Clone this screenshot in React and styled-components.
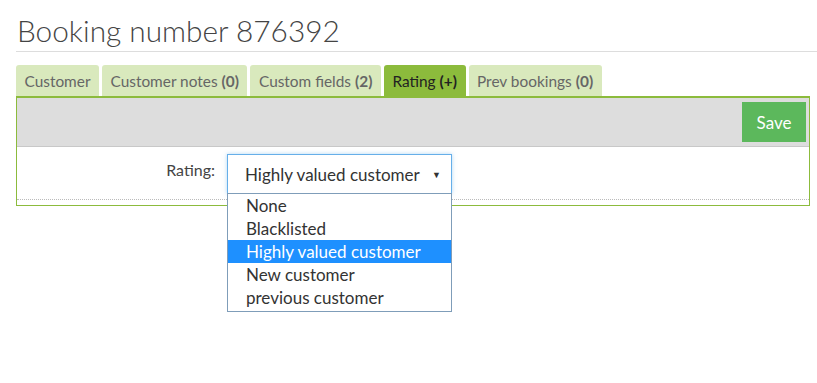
import React, { useState } from 'react';
import styled, { createGlobalStyle } from 'styled-components';

const GlobalStyle = createGlobalStyle`
  body {
    margin: 0;
    background: #fff;
    font-family: Lato, "Liberation Sans", sans-serif;
    color: #333;
  }
`;

const tabs = [
  { label: 'Customer' },
  { label: 'Customer notes', count: '0' },
  { label: 'Custom fields', count: '2' },
  { label: 'Rating', count: '+', active: true },
  { label: 'Prev bookings', count: '0' },
];

const options = ['None', 'Blacklisted', 'Highly valued customer', 'New customer', 'previous customer'];

const App = () => {
  const [rating] = useState('Highly valued customer');

  return (
    <>
      <GlobalStyle />
      <Page>
        <Title>Booking number 876392</Title>
        <TabBar>
          {tabs.map(tab => (
            <Tab key={tab.label} active={tab.active}>
              {tab.label}
              {tab.count && <Count>({tab.count})</Count>}
            </Tab>
          ))}
        </TabBar>
        <Panel>
          <Toolbar>
            <SaveButton>Save</SaveButton>
          </Toolbar>
          <FormRow>
            <Label>Rating:</Label>
            <SelectWrap>
              <SelectBox>
                <span>{rating}</span>
                <Caret>▼</Caret>
              </SelectBox>
              <OptionList>
                {options.map(opt => (
                  <Option key={opt} selected={opt === rating}>{opt}</Option>
                ))}
              </OptionList>
            </SelectWrap>
          </FormRow>
        </Panel>
      </Page>
    </>
  );
};

const Page = styled.div`
  box-sizing: border-box;
  min-height: 383px;
  padding: 14px 0 0 16px;
`;

const Title = styled.h1`
  margin: 0;
  padding: 0 0 3px 1px;
  font-size: 29.8px;
  font-weight: 300;
  line-height: 34px;
  color: #444;
  border-bottom: 1px solid #ddd;
`;

const TabBar = styled.div`
  display: flex;
  gap: 3px;
  margin-top: 13px;
`;

const Tab = styled.div`
  height: 31px;
  padding: 0 8.5px;
  display: flex;
  align-items: center;
  border-radius: 3px 3px 0 0;
  font-size: 15.4px;
  background: ${props => (props.active ? '#8cbb3c' : '#d9e9bd')};
  color: ${props => (props.active ? '#222' : '#666')};
`;

const Count = styled.b`
  margin-left: 4px;
`;

const Panel = styled.div`
  width: 792px;
  border: 1px solid #8cbb3c;
  border-top-width: 2px;
`;

const Toolbar = styled.div`
  display: flex;
  justify-content: flex-end;
  padding: 4px 3px 4px 0;
  background: #dddddd;
  border-bottom: 1px solid #c8c8c8;
`;

const SaveButton = styled.button`
  width: 64px;
  height: 40px;
  border: none;
  background: #5cb85c;
  color: #fff;
  font-family: inherit;
  font-size: 17px;
`;

const FormRow = styled.div`
  display: flex;
  align-items: flex-start;
  gap: 12px;
  padding: 7px 0 5px;
  border-bottom: 1px dotted #bbb;
  margin-bottom: 5px;
`;

const Label = styled.label`
  width: 198px;
  text-align: right;
  font-size: 16px;
  line-height: 20px;
  margin-top: 6px;
  color: #444;
`;

const SelectWrap = styled.div`
  position: relative;
`;

const SelectBox = styled.div`
  box-sizing: border-box;
  width: 225px;
  height: 40px;
  padding: 0 10px 0 17px;
  display: flex;
  align-items: center;
  justify-content: space-between;
  border: 1px solid #66afe9;
  box-shadow: 0 0 4px rgba(102, 175, 233, 0.5);
  font-size: 17px;
  color: #333;
`;

const Caret = styled.span`
  font-size: 9px;
  color: #333;
`;

const OptionList = styled.ul`
  position: absolute;
  top: 39px;
  left: 0;
  box-sizing: border-box;
  width: 225px;
  margin: 0;
  padding: 0 0 2px;
  list-style: none;
  background: #fff;
  border: 1px solid #7f9db9;
  z-index: 2;
`;

const Option = styled.li`
  height: 23px;
  line-height: 23px;
  padding-left: 18px;
  font-size: 17px;
  background: ${props => (props.selected ? '#1e90ff' : '#fff')};
  color: ${props => (props.selected ? '#fff' : '#333')};
`;

export default App;
